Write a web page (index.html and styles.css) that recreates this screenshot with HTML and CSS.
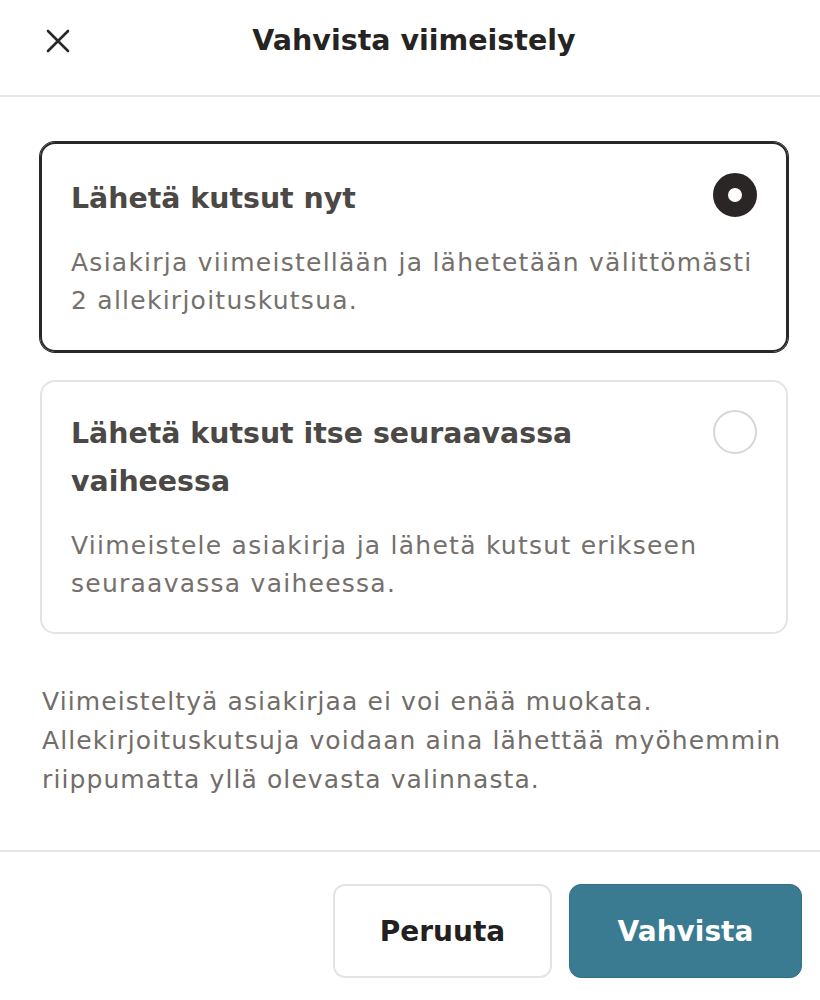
FILE: index.html
```html
<!DOCTYPE html>
<html lang="fi">
<head>
<meta charset="utf-8">
<title>Vahvista viimeistely</title>
<link rel="stylesheet" href="styles.css">
</head>
<body>
<div class="dialog">
  <header class="header">
    <button class="close" aria-label="Sulje">
      <svg width="24" height="24" viewBox="0 0 24 24" fill="none" stroke="#2a2727" stroke-width="2.6" stroke-linecap="round">
        <path d="M2 2 L22 22 M22 2 L2 22"/>
      </svg>
    </button>
    <h1 class="title">Vahvista viimeistely</h1>
    <span></span>
  </header>
  <main class="content">
    <div class="option selected">
      <div class="option-head">
        <h2 class="option-title">Lähetä kutsut nyt</h2>
        <span class="radio checked"></span>
      </div>
      <p class="option-desc">Asiakirja viimeistellään ja lähetetään välittömästi 2&nbsp;allekirjoituskutsua.</p>
    </div>
    <div class="option">
      <div class="option-head">
        <h2 class="option-title">Lähetä kutsut itse seuraavassa vaiheessa</h2>
        <span class="radio"></span>
      </div>
      <p class="option-desc">Viimeistele asiakirja ja lähetä kutsut erikseen seuraavassa vaiheessa.</p>
    </div>
    <p class="info">Viimeisteltyä asiakirjaa ei voi enää muokata. Allekirjoituskutsuja voidaan aina lähettää myöhemmin riippumatta yllä olevasta valinnasta.</p>
  </main>
  <footer class="footer">
    <button class="btn btn-secondary">Peruuta</button>
    <button class="btn btn-primary">Vahvista</button>
  </footer>
</div>
</body>
</html>
```
FILE: styles.css
```css
* { box-sizing: border-box; }
html, body { margin: 0; padding: 0; background: #fff; }
body {
  font-family: "DejaVu Sans", "Noto Sans", sans-serif;
  color: #2a2727;
  width: 820px;
  height: 1000px;
  overflow: hidden;
}
.dialog {
  display: flex;
  flex-direction: column;
  height: 1000px;
}
.header {
  height: 97px;
  border-bottom: 2px solid #e6e6e6;
  display: grid;
  grid-template-columns: 1fr auto 1fr;
  align-items: center;
  padding: 0 38px 14px 46px;
}
.close {
  border: 0;
  background: none;
  padding: 0;
  width: 24px;
  height: 24px;
  display: flex;
  cursor: pointer;
}
.title {
  margin: 0;
  font-size: 28.5px;
  font-weight: 700;
  color: #262323;
}
.content {
  padding: 45px 32px 0 40px;
  flex: 1;
}
.option {
  border: 2px solid #e4e4e4;
  border-radius: 15px;
  padding: 28px 29px 29px 29px;
  margin-bottom: 28px;
}
.option.selected {
  border-color: #2a2727;
  box-shadow: 0 0 0 1px #2a2727;
  padding-top: 31px;
  padding-bottom: 30px;
}
.option-head {
  display: flex;
  align-items: flex-start;
  justify-content: space-between;
  gap: 24px;
}
.option-title {
  margin: 0;
  font-size: 28.4px;
  line-height: 48px;
  font-weight: 700;
  color: #4b4845;
}
.radio {
  flex: 0 0 44px;
  width: 44px;
  height: 44px;
  border-radius: 50%;
  border: 2px solid #d8d6d4;
  background: #fff;
  margin-top: 0;
}
.radio.checked {
  border: 15px solid #2a2626;
  margin-top: -2px;
}
.option-desc {
  margin: 21px 0 0;
  font-size: 25px;
  line-height: 38px;
  color: #75706b;
  letter-spacing: 1.25px;
}
.info {
  margin: 48px 0 0 2px;
  font-size: 25px;
  line-height: 39px;
  color: #726d68;
  letter-spacing: 1.1px;
}
.footer {
  height: 150px;
  border-top: 2px solid #e6e6e6;
  display: flex;
  justify-content: flex-end;
  align-items: flex-start;
  gap: 17px;
  padding: 32px 18px 0 0;
}
.btn {
  font-family: inherit;
  font-size: 28px;
  font-weight: 700;
  height: 94px;
  border-radius: 12px;
  cursor: pointer;
}
.btn-secondary {
  width: 219px;
  background: #fff;
  color: #232020;
  border: 2px solid #e4e4e4;
}
.btn-primary {
  width: 233px;
  background: #3b7b92;
  color: #fff;
  border: 1px solid #356f84;
}
```
